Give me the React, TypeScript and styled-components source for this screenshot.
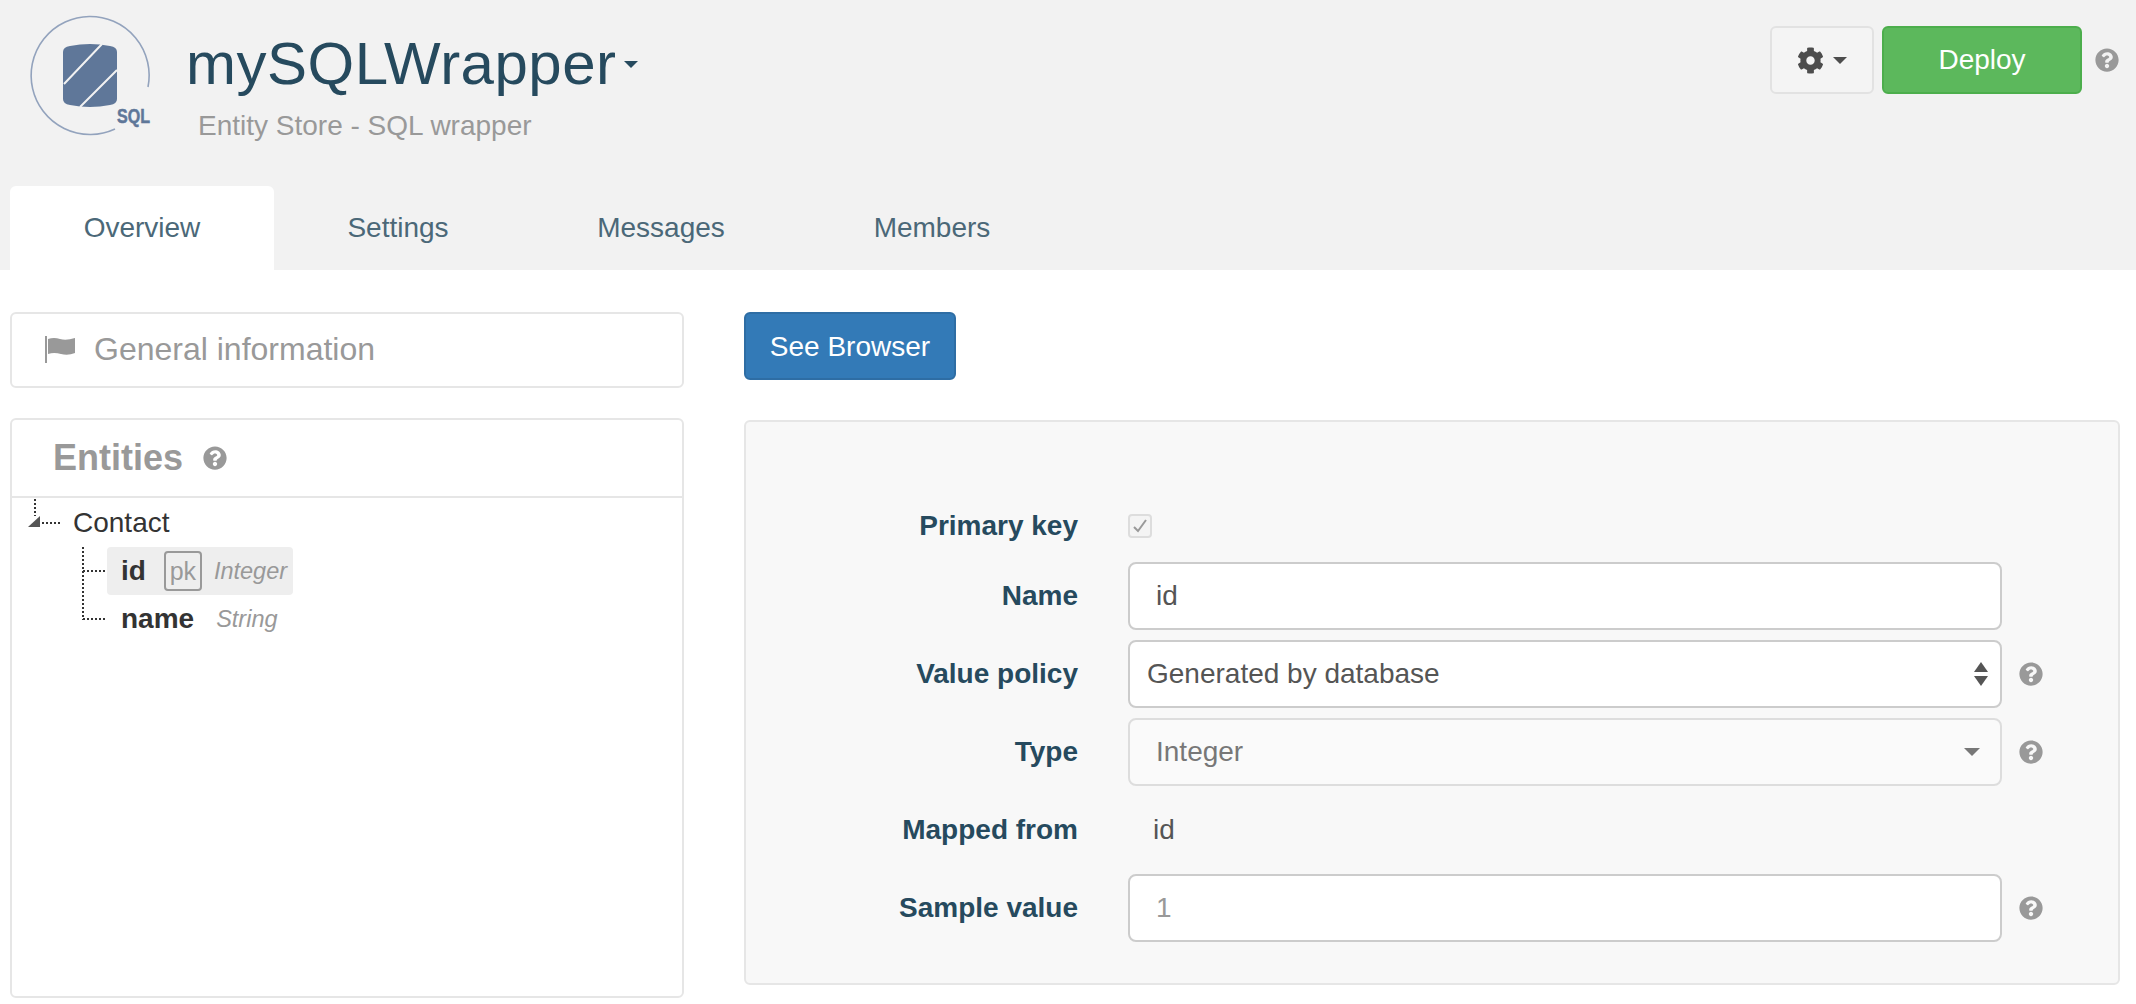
import styled, { createGlobalStyle } from "styled-components";
import { FaCog, FaQuestionCircle } from "react-icons/fa";

const GlobalStyle = createGlobalStyle`
  html, body {
    margin: 0;
    background: #fff;
  }
  body {
    font-family: "Liberation Sans", Arial, sans-serif;
    font-size: 28px;
    color: #333;
  }
  * {
    box-sizing: border-box;
  }
`;

const Page = styled.div`
  width: 2136px;
  height: 1004px;
  overflow: hidden;
  background: #fff;
`;

const Header = styled.header`
  height: 270px;
  background: #f2f2f2;
  display: flex;
  flex-direction: column;
  justify-content: space-between;
`;

const HeaderTop = styled.div`
  display: flex;
  justify-content: space-between;
  padding: 16px 17px 0 30px;
`;

const Brand = styled.div`
  display: flex;
  gap: 34px;
`;

const BrandLogo = styled.svg`
  width: 122px;
  height: 122px;
  flex: none;
  overflow: visible;
`;

const TitleBlock = styled.div`
  display: flex;
  flex-direction: column;
  padding-top: 16px;
`;

const TitleRow = styled.div`
  display: flex;
  align-items: center;
  gap: 7px;
`;

const Title = styled.h1`
  margin: 0;
  font-size: 60px;
  line-height: 64px;
  font-weight: 400;
  letter-spacing: 0.5px;
  color: #264a5e;
`;

const Caret = styled.span<{ $color?: string; $size?: number }>`
  display: inline-block;
  width: 0;
  height: 0;
  border-left: ${(p) => p.$size ?? 8}px solid transparent;
  border-right: ${(p) => p.$size ?? 8}px solid transparent;
  border-top: ${(p) => p.$size ?? 8}px solid ${(p) => p.$color ?? "#264a5e"};
`;

const Subtitle = styled.div`
  margin: 13px 0 0 12px;
  font-size: 28px;
  line-height: 34px;
  color: #999;
`;

const Actions = styled.div`
  display: flex;
  align-items: center;
  height: 68px;
  margin-top: 10px;
`;

const GearButton = styled.button`
  width: 104px;
  height: 68px;
  display: flex;
  align-items: center;
  justify-content: center;
  gap: 9px;
  background: #f4f4f4;
  border: 2px solid #e2e2e2;
  border-radius: 6px;
  color: #4d4d4d;
  font-size: 27px;
  padding: 0;
`;

const DeployButton = styled.button`
  width: 200px;
  height: 68px;
  margin-left: 8px;
  background: #5cb85c;
  border: 2px solid #4cae4c;
  border-radius: 6px;
  color: #fff;
  font-family: inherit;
  font-size: 28px;
  padding: 0;
`;

const HelpIcon = styled(FaQuestionCircle)`
  width: 24px;
  height: 24px;
  color: #999;
  flex: none;
`;

const HeaderHelp = styled.span`
  display: flex;
  margin-left: 13px;
`;

const Tabs = styled.nav`
  display: flex;
  padding-left: 10px;
`;

const Tab = styled.a<{ $active?: boolean; $width: number }>`
  width: ${(p) => p.$width}px;
  height: 84px;
  display: flex;
  align-items: center;
  justify-content: center;
  background: ${(p) => (p.$active ? "#fff" : "transparent")};
  border-radius: 6px 6px 0 0;
  color: #4b6878;
  font-size: 28px;
`;

const Content = styled.main`
  display: grid;
  grid-template-columns: 674px 1376px;
  column-gap: 60px;
  padding: 42px 16px 0 10px;
`;

const LeftColumn = styled.div`
  display: flex;
  flex-direction: column;
  gap: 30px;
`;

const InfoBar = styled.div`
  height: 76px;
  display: flex;
  align-items: center;
  gap: 19px;
  padding: 0 0 2px 33px;
  border: 2px solid #e6e6e6;
  border-radius: 6px;
  color: #999;
  font-size: 32px;
`;

const FlagIcon = styled.svg`
  width: 30px;
  height: 27px;
  flex: none;
`;

const EntitiesPanel = styled.section`
  height: 580px;
  border: 2px solid #e6e6e6;
  border-radius: 6px;
`;

const EntitiesHeader = styled.div`
  height: 78px;
  display: flex;
  align-items: center;
  gap: 20px;
  padding: 0 0 0 41px;
  border-bottom: 2px solid #e6e6e6;
  color: #999;
  font-size: 36px;
  font-weight: 700;
`;

const Tree = styled.div`
  display: flex;
  flex-direction: column;
  padding: 1px 0 0 14px;
`;

const TreeRow = styled.div<{ $nested?: boolean }>`
  display: flex;
  align-items: center;
  margin-left: ${(p) => (p.$nested ? 55 : 0)}px;
`;

const Connector = styled.svg`
  flex: none;
`;

const RootLabel = styled.span`
  margin-left: 13px;
  font-size: 28px;
  line-height: 48px;
  color: #333;
`;

const Attribute = styled.div<{ $selected?: boolean }>`
  height: 48px;
  display: flex;
  align-items: center;
  padding: 0 6px 0 14px;
  border-radius: 4px;
  background: ${(p) => (p.$selected ? "#eee" : "transparent")};
`;

const AttributeName = styled.b`
  font-size: 28px;
  color: #333;
`;

const PkBadge = styled.span`
  width: 38px;
  height: 40px;
  display: flex;
  align-items: center;
  justify-content: center;
  margin-left: 18px;
  border: 2px solid #999;
  border-radius: 4px;
  color: #999;
  font-size: 25px;
`;

const AttributeType = styled.i<{ $gap: number }>`
  margin-left: ${(p) => p.$gap}px;
  color: #999;
  font-size: 23.5px;
`;

const RightColumn = styled.div`
  display: flex;
  flex-direction: column;
  align-items: flex-start;
  gap: 40px;
`;

const BrowserButton = styled.button`
  width: 212px;
  height: 68px;
  background: #337ab7;
  border: 2px solid #2e6da4;
  border-radius: 6px;
  color: #fff;
  font-family: inherit;
  font-size: 28px;
  padding: 1px 0 0;
`;

const FormPanel = styled.section`
  width: 100%;
  height: 565px;
  display: flex;
  flex-direction: column;
  padding-top: 73px;
  background: #f8f8f8;
  border: 2px solid #e6e6e6;
  border-radius: 6px;
`;

const FormRow = styled.div<{ $height: number }>`
  height: ${(p) => p.$height}px;
  display: grid;
  grid-template-columns: 365px 874px 24px;
  column-gap: 17px;
  align-items: center;
`;

const RowLabel = styled.label`
  padding-right: 33px;
  text-align: right;
  font-weight: 700;
  font-size: 28px;
  color: #264a5e;
`;

const CheckBox = styled.span`
  width: 24px;
  height: 24px;
  display: flex;
  align-items: center;
  justify-content: center;
  background: #f4f4f4;
  border: 2px solid #ddd;
  border-radius: 4px;
`;

const Field = styled.div<{ $disabled?: boolean; $inset?: number; $end?: number }>`
  height: 68px;
  display: flex;
  align-items: center;
  justify-content: space-between;
  padding: 0 ${(p) => p.$end ?? 18}px 0 ${(p) => p.$inset ?? 26}px;
  background: ${(p) => (p.$disabled ? "#fafafa" : "#fff")};
  border: 2px solid ${(p) => (p.$disabled ? "#ddd" : "#ccc")};
  border-radius: 8px;
  color: ${(p) => (p.$disabled ? "#777" : "#555")};
  font-size: 28px;
`;

const Placeholder = styled.span`
  color: #999;
`;

const StaticValue = styled.div`
  padding-left: 25px;
  color: #555;
  font-size: 28px;
`;

const Spinner = styled.span`
  display: flex;
  flex-direction: column;
  gap: 4px;
`;

const CaretUp = styled.span`
  display: block;
  width: 0;
  height: 0;
  border-left: 7px solid transparent;
  border-right: 7px solid transparent;
  border-bottom: 10px solid #555;
`;

const CaretDown = styled(CaretUp)`
  border-bottom: 0;
  border-top: 10px solid #555;
`;

function Logo() {
  return (
    <BrandLogo viewBox="0 0 122 122">
      <path d="M85 113 A59 59 0 1 1 118 71" fill="none" stroke="#93a3bd" strokeWidth="1.6" />
      <path
        d="M33 36 Q33 31 40 30 Q60 26 80 30 Q87 31 87 36 V83 Q87 88 80 89 Q60 93 40 89 Q33 88 33 83 Z"
        fill="#5f7799"
      />
      <path d="M34 68 L72 28 M50 91 L87 54" stroke="#f2f2f2" strokeWidth="2" fill="none" />
      <text
        x="87"
        y="107"
        fontFamily="Liberation Sans, sans-serif"
        fontWeight="700"
        fontSize="20"
        fill="#5f7799"
        stroke="#5f7799"
        strokeWidth="0.5"
        textLength="33"
        lengthAdjust="spacingAndGlyphs"
      >
        SQL
      </text>
    </BrandLogo>
  );
}

function Help() {
  return <HelpIcon />;
}

export default function App() {
  return (
    <Page>
      <GlobalStyle />
      <Header>
        <HeaderTop>
          <Brand>
            <Logo />
            <TitleBlock>
              <TitleRow>
                <Title>mySQLWrapper</Title>
                <Caret $size={7} />
              </TitleRow>
              <Subtitle>Entity Store - SQL wrapper</Subtitle>
            </TitleBlock>
          </Brand>
          <Actions>
            <GearButton>
              <FaCog />
              <Caret $color="#4d4d4d" $size={7} />
            </GearButton>
            <DeployButton>Deploy</DeployButton>
            <HeaderHelp>
              <Help />
            </HeaderHelp>
          </Actions>
        </HeaderTop>
        <Tabs>
          <Tab $active $width={264}>Overview</Tab>
          <Tab $width={248}>Settings</Tab>
          <Tab $width={278}>Messages</Tab>
          <Tab $width={264}>Members</Tab>
        </Tabs>
      </Header>
      <Content>
        <LeftColumn>
          <InfoBar>
            <FlagIcon viewBox="0 0 30 27">
              <rect x="0" y="0" width="2" height="27" fill="#999" />
              <path d="M3 3 Q9 1 15 3 T30 2 V17 Q23 20 16 18 T3 18 Z" fill="#999" />
            </FlagIcon>
            General information
          </InfoBar>
          <EntitiesPanel>
            <EntitiesHeader>
              Entities
              <HelpIcon />
            </EntitiesHeader>
            <Tree>
              <TreeRow>
                <Connector width="34" height="48" viewBox="0 0 34 48">
                  <path d="M9 0 V17" stroke="#333" strokeWidth="2" strokeDasharray="2 2" fill="none" />
                  <path d="M16 24 H34" stroke="#333" strokeWidth="2" strokeDasharray="2 2" fill="none" />
                  <path d="M14 17 V28 H2 Z" fill="#555" />
                </Connector>
                <RootLabel>Contact</RootLabel>
              </TreeRow>
              <TreeRow $nested>
                <Connector width="26" height="48" viewBox="0 0 26 48">
                  <path d="M2 0 V48" stroke="#333" strokeWidth="2" strokeDasharray="2 2" fill="none" />
                  <path d="M2 24 H26" stroke="#333" strokeWidth="2" strokeDasharray="2 2" fill="none" />
                </Connector>
                <Attribute $selected>
                  <AttributeName>id</AttributeName>
                  <PkBadge>pk</PkBadge>
                  <AttributeType $gap={12}>Integer</AttributeType>
                </Attribute>
              </TreeRow>
              <TreeRow $nested>
                <Connector width="26" height="48" viewBox="0 0 26 48">
                  <path d="M2 0 V25" stroke="#333" strokeWidth="2" strokeDasharray="2 2" fill="none" />
                  <path d="M2 24 H26" stroke="#333" strokeWidth="2" strokeDasharray="2 2" fill="none" />
                </Connector>
                <Attribute>
                  <AttributeName>name</AttributeName>
                  <AttributeType $gap={22}>String</AttributeType>
                </Attribute>
              </TreeRow>
            </Tree>
          </EntitiesPanel>
        </LeftColumn>
        <RightColumn>
          <BrowserButton>See Browser</BrowserButton>
          <FormPanel>
            <FormRow $height={62}>
              <RowLabel>Primary key</RowLabel>
              <CheckBox>
                <svg width="16" height="14" viewBox="0 0 16 14">
                  <path d="M2 8 L6 12 L14 1" fill="none" stroke="#999" strokeWidth="2" />
                </svg>
              </CheckBox>
            </FormRow>
            <FormRow $height={78}>
              <RowLabel>Name</RowLabel>
              <Field>id</Field>
            </FormRow>
            <FormRow $height={78}>
              <RowLabel>Value policy</RowLabel>
              <Field $inset={17} $end={12}>
                Generated by database
                <Spinner>
                  <CaretUp />
                  <CaretDown />
                </Spinner>
              </Field>
              <Help />
            </FormRow>
            <FormRow $height={78}>
              <RowLabel>Type</RowLabel>
              <Field $disabled $end={20}>
                Integer
                <Caret $color="#777" $size={8} />
              </Field>
              <Help />
            </FormRow>
            <FormRow $height={78}>
              <RowLabel>Mapped from</RowLabel>
              <StaticValue>id</StaticValue>
            </FormRow>
            <FormRow $height={78}>
              <RowLabel>Sample value</RowLabel>
              <Field>
                <Placeholder>1</Placeholder>
              </Field>
              <Help />
            </FormRow>
          </FormPanel>
        </RightColumn>
      </Content>
    </Page>
  );
}
